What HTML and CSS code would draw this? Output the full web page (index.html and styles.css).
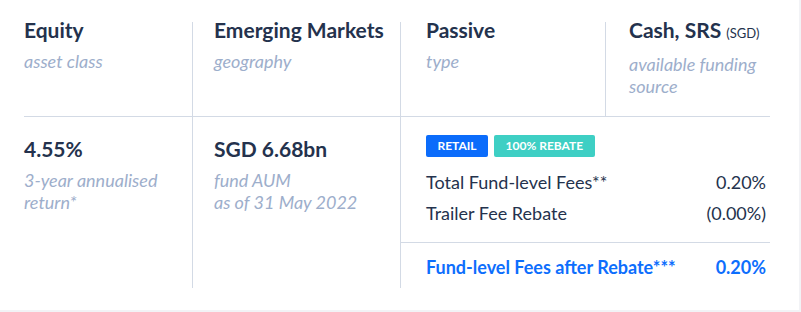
FILE: index.html
```html
<!DOCTYPE html>
<html lang="en">
<head>
<meta charset="utf-8">
<title>Fund overview</title>
<link rel="stylesheet" href="styles.css">
</head>
<body>
<div class="card">
  <div class="top">
    <div class="cell c1">
      <div class="title">Equity</div>
      <div class="sub">asset class</div>
    </div>
    <div class="cell c2">
      <div class="title">Emerging Markets</div>
      <div class="sub">geography</div>
    </div>
    <div class="cell c3">
      <div class="title">Passive</div>
      <div class="sub">type</div>
    </div>
    <div class="cell c4">
      <div class="title">Cash, SRS <span class="small">(SGD)</span></div>
      <div class="sub">available funding<br>source</div>
    </div>
  </div>
  <div class="bottom">
    <div class="cell b1">
      <div class="title">4.55%</div>
      <div class="sub">3-year annualised<br>return*</div>
    </div>
    <div class="cell b2">
      <div class="title">SGD 6.68bn</div>
      <div class="sub">fund AUM<br>as of 31 May 2022</div>
    </div>
    <div class="cell b3">
      <div class="fees">
        <div class="badges">
          <span class="badge retail">RETAIL</span>
          <span class="badge rebate">100% REBATE</span>
        </div>
        <div class="row"><span>Total Fund-level Fees**</span><span>0.20%</span></div>
        <div class="row"><span>Trailer Fee Rebate</span><span>(0.00%)</span></div>
      </div>
      <div class="total row"><span>Fund-level Fees after Rebate***</span><span>0.20%</span></div>
    </div>
  </div>
</div>
</body>
</html>
```

FILE: styles.css
```css
* { box-sizing: border-box; }
html, body { margin: 0; padding: 0; }
body {
  background: #f2f3f6;
  font-family: Lato, "Open Sans", sans-serif;
  color: #24324d;
}
.card {
  width: 799px;
  height: 310px;
  background: #ffffff;
  padding: 22px 29px 23px 24px;
}
.top {
  display: grid;
  grid-template-columns: 169px 208px 205px 164px;
  border-bottom: 1px solid #d3dae5;
}
.bottom {
  display: grid;
  grid-template-columns: 169px 208px 369px;
}
.cell { border-right: 1px solid #d3dae5; }
.top .cell { padding-bottom: 19px; }
.top .c4 { border-right: none; }
.c2 { padding-left: 21px; }
.c3 { padding-left: 25px; }
.c4 { padding-left: 23px; }
.title {
  font-size: 21px;
  line-height: 24px;
  font-weight: 700;
  color: #24324d;
  margin-top: -4px;
  white-space: nowrap;
}
.small { font-size: 13px; font-weight: 400; }
.sub {
  margin-top: 8px;
  font-size: 18px;
  line-height: 22px;
  font-style: italic;
  color: #9daecb;
  white-space: nowrap;
}
.bottom .b1, .bottom .b2 { padding-top: 24px; height: 171px; }
.bottom .b2 { padding-left: 21px; }
.bottom .b3 { border-right: none; }
.fees {
  padding: 18px 4px 13px 25px;
  border-bottom: 1px solid #d3dae5;
}
.badges { display: flex; gap: 6px; margin-bottom: 10px; }
.badge {
  display: inline-block;
  height: 22px;
  line-height: 22px;
  padding: 0 11.5px;
  border-radius: 2px;
  color: #ffffff;
  font-size: 12px;
  font-weight: 700;
}
.retail { background: #0b6cfb; }
.rebate { background: #3ecfc4; }
.row {
  display: flex;
  justify-content: space-between;
  font-size: 18px;
  line-height: 31px;
  color: #24324d;
}
.total {
  padding: 12px 4px 9px 25px;
  line-height: 24px;
  font-weight: 700;
  color: #0d6efd;
}
```
